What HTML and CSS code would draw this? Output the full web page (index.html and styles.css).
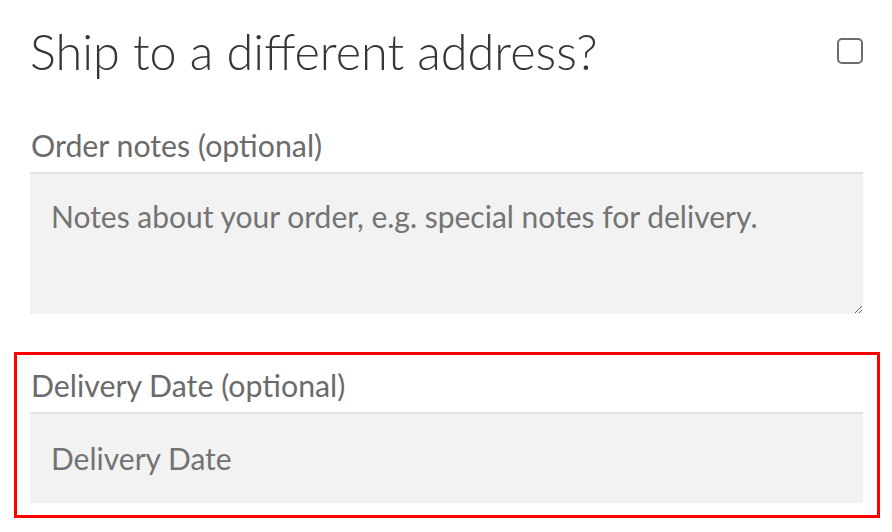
FILE: index.html
```html
<!DOCTYPE html>
<html>

	<head>
		<meta charset="UTF-8">
		<title>Checkout</title>
		<link rel="stylesheet" href="styles.css">
	</head>

	<body>
		<div id="box">
			<div class="ship-row">
				<h3 class="ship-title">Ship to a different address?</h3>
				<input type="checkbox" class="ship-check" />
			</div>

			<p class="field">
				<label class="field-label" for="order_comments">Order notes (optional)</label>
				<textarea id="order_comments" class="field-text" placeholder="Notes about your order, e.g. special notes for delivery."></textarea>
			</p>

			<p class="field delivery">
				<label class="field-label" for="delivery_date">Delivery Date (optional)</label>
				<input type="text" id="delivery_date" class="field-input" placeholder="Delivery Date" />
			</p>
		</div>
	</body>

</html>
```

FILE: styles.css
```css
* {
	margin: 0;
	padding: 0;
	box-sizing: border-box;
}

body {
	background: #fff;
	font-family: Lato, "Open Sans", sans-serif;
	color: #333;
}

#box {
	padding: 0 29px 0 30px;
}

.ship-row {
	display: flex;
	align-items: center;
	justify-content: space-between;
	height: 102px;
}

.ship-title {
	font-weight: 300;
	font-size: 48.6px;
	line-height: 58px;
	color: #363636;
}

.ship-check {
	appearance: none;
	-webkit-appearance: none;
	width: 26px;
	height: 26px;
	border: 2px solid #6d6d6d;
	border-radius: 5px;
	background: #fff;
}

.field {
	display: flex;
	flex-direction: column;
	margin-top: 25px;
}

.field-label {
	font-size: 30.3px;
	color: #6b6b6b;
	line-height: 36px;
	padding-bottom: 9px;
	margin-left: 1px;
}

.field-text,
.field-input {
	display: block;
	width: 100%;
	border: 0;
	background: #f2f2f2;
	box-shadow: inset 0 2px 0 #e2e2e2;
	font-family: Lato, "Open Sans", sans-serif;
	font-size: 30px;
	color: #444;
	outline: none;
}

.field-text {
	height: 142px;
	padding: 25px 21px 0;
	line-height: 38px;
}

.field-input {
	height: 91px;
	padding: 0 21px;
}

.field-text::placeholder,
.field-input::placeholder {
	color: #737373;
}

.delivery {
	margin: 38px -17px 0 -16px;
	border: 3px solid #f00;
	padding: 12px 14px 12px 13px;
}
```
